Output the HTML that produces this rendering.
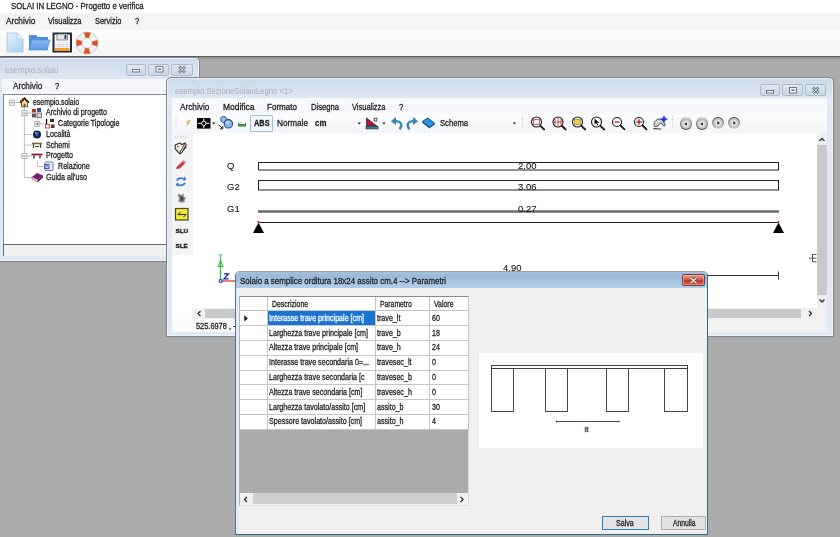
<!DOCTYPE html>
<html><head><meta charset="utf-8"><title>SOLAI IN LEGNO</title>
<style>
*{box-sizing:border-box;margin:0;padding:0}
html,body{width:840px;height:537px;overflow:hidden;background:#ababab;font-family:"Liberation Sans",sans-serif;color:#111}
.a{position:absolute}
.t{position:absolute;white-space:nowrap;line-height:1;color:#1c1c1c;font-size:9px;-webkit-text-stroke:.28px currentColor;transform:scaleX(.87);transform-origin:0 50%}
.ar{transform:scaleX(.999);font-size:9.5px;color:#111;-webkit-text-stroke:.08px #111}
svg{position:absolute;overflow:visible}
#main-top{left:0;top:0;width:840px;height:56px;background:#fff}
#main-menu{left:0;top:13px;width:840px;height:17px;background:linear-gradient(#f3f3f3,#f6f6f6)}
#main-tb{left:0;top:30px;width:840px;height:26px;background:linear-gradient(#fdfdfd,#f5f5f5)}
#mdi{left:0;top:55.800px;width:840px;height:482px;background:linear-gradient(#8f8f8f,#a6a6a6 2.500px,#ababab 5px);border-top:1.200px solid #606060}
.win{position:absolute;background:linear-gradient(#ccd9e8,#dfe8f3 21px,#e0e9f4);border:1px solid #7d8590;border-radius:5px 5px 0 0;box-shadow:inset 0 0 0 1px #eef3f9}
.cap{filter:blur(.55px);color:#a6afb9;-webkit-text-stroke:0}
.wb{position:absolute;height:12px;border:1px solid #adbaca;border-radius:2px;background:linear-gradient(#dfe7f1,#cbd7e6)}
.tr{font-size:8.700px;transform:scaleX(.82)}
.g{font-size:8.800px;color:#1c1c1c;transform:scaleX(.81)}
.gl{position:absolute;background:#c6c6c6}
</style></head><body>

<div class="a" id="main-top"></div>
<div class="t " style="left:11px;top:2px;">SOLAI IN LEGNO - Progetto e verifica</div>
<div class="a" id="main-menu"></div>
<div class="t " style="left:6px;top:17px;transform:scaleX(0.915)">Archivio</div>
<div class="t " style="left:48px;top:17px;transform:scaleX(0.83)">Visualizza</div>
<div class="t " style="left:95px;top:17px;transform:scaleX(0.825)">Servizio</div>
<div class="t " style="left:135px;top:17px;">?</div>
<div class="a" id="main-tb"></div>
<svg style="left:6px;top:32px" width="94" height="22" viewBox="0 0 94 22">
  <defs><linearGradient id="fg" x1="0" y1="0" x2=".6" y2="1"><stop offset="0" stop-color="#e6f0fa"/><stop offset=".5" stop-color="#cfe2f5"/><stop offset="1" stop-color="#b4d2ef"/></linearGradient><linearGradient id="fo" x1="0" y1="0" x2="0" y2="1"><stop offset="0" stop-color="#8dbaf2"/><stop offset="1" stop-color="#5f98e4"/></linearGradient></defs><path d="M1 1h10l6 6v13H1z" fill="url(#fg)" stroke="#a9cbea" stroke-width="1"/>
  <path d="M11 1v6h6z" fill="#eef6fd" stroke="#a9cbea" stroke-width=".8"/>
  <path d="M23 3h7l2 2h10v13H23z" fill="#4f8fda"/>
  <path d="M23 18l3-10h18l-3 10z" fill="url(#fo)" stroke="#4a86d0" stroke-width=".6"/>
  <rect x="47.500" y="1.500" width="17.500" height="18" fill="#f4f4f4" stroke="#1d2a3a" stroke-width="2"/>
  <rect x="51" y="2" width="10.500" height="6" fill="#dfe6ea" stroke="#555" stroke-width=".6"/>
  <rect x="49" y="10" width="14.500" height="7" fill="#f4f4f4"/><path d="M49 12.500h14.500M49 14.500h14.500M53 10v6M57 10v6M61 10v6" stroke="#c9c9c9" stroke-width=".5"/><rect x="58.500" y="3" width="1.800" height="4" fill="#333"/>
  <rect x="49" y="16" width="14.500" height="3" fill="#f39a2d"/>
  <circle cx="81" cy="11" r="8" fill="none" stroke="#f2f2f2" stroke-width="6"/>
  <circle cx="81" cy="11" r="8" fill="none" stroke="#dc5420" stroke-width="6" stroke-dasharray="5.200 7.366" stroke-dashoffset="2.600"/>
  <circle cx="81" cy="11" r="11" fill="none" stroke="#b9b9b9" stroke-width=".7"/>
  <circle cx="81" cy="11" r="5" fill="none" stroke="#c9c9c9" stroke-width=".7"/>
</svg>
<div class="a" id="mdi"></div>
<div class="win" style="left:-3px;top:57px;width:202.600px;height:204.500px"></div>
<div class="t cap" style="left:5px;top:66px;transform:scaleX(.89)">esempio.solaio</div>
<div class="wb" style="left:125.5px;top:63.700px;width:20.5px"></div>
<div class="wb" style="left:148.3px;top:63.700px;width:20.5px"></div>
<div class="wb" style="left:171.3px;top:63.700px;width:22px"></div>
<svg style="left:125px;top:63.200px" width="70" height="13" viewBox="0 0 70 13">
 <rect x="7.500" y="6.500" width="7" height="2.500" fill="#f4f7fb" stroke="#66717f" stroke-width=".9"/>
 <rect x="31" y="3.500" width="7" height="5.500" fill="#f4f7fb" stroke="#66717f" stroke-width=".9"/>
 <rect x="33" y="5.500" width="3" height="1.500" fill="#66717f"/>
 <path d="M54 3.500l6 6M60 3.500l-6 6" stroke="#66717f" stroke-width="2.600"/>
 <path d="M54 3.500l6 6M60 3.500l-6 6" stroke="#f4f7fb" stroke-width="1"/>
</svg>
<div class="a" style="left:2px;top:79px;width:193px;height:15px;background:#f5f7fa"></div>
<div class="t " style="left:13px;top:82px;transform:scaleX(0.915)">Archivio</div>
<div class="t " style="left:55px;top:82px;">?</div>
<div class="a" style="left:3px;top:94px;width:192px;height:150.600px;background:#fff;border:1px solid #868c94;border-bottom:1.600px solid #6c6c6c"></div>
<div class="a" style="left:3px;top:244.800px;width:192px;height:11.200px;background:#f0f0f0;border-left:1px solid #6c6c6c"></div>
<div class="t tr" style="left:33px;top:97.7px;transform:scaleX(0.795)">esempio.solaio</div>
<div class="t tr" style="left:46px;top:108.4px;">Archivio di progetto</div>
<div class="t tr" style="left:58px;top:119.1px;">Categorie Tipologie</div>
<div class="t tr" style="left:46px;top:129.8px;">Località</div>
<div class="t tr" style="left:46px;top:140.5px;">Schemi</div>
<div class="t tr" style="left:46px;top:151.3px;">Progetto</div>
<div class="t tr" style="left:58px;top:162.1px;">Relazione</div>
<div class="t tr" style="left:46px;top:172.8px;">Guida all'uso</div>
<svg style="left:0;top:94.500px" width="70" height="95" viewBox="0 94 70 95">
 <g stroke="#b4b4b4" stroke-width=".8" fill="none">
  <path d="M14.500 101.500h5.500M24.400 106v70.500M24.400 112h8M24.400 133.500h8M24.400 144h8M24.400 155h8M24.400 176.500h8M37.400 116.500v6.200h7M37.400 159v6.500h7"/>
 </g>
 <g fill="#fff" stroke="#9a9a9a" stroke-width=".8">
  <rect x="9.300" y="99.200" width="5" height="5"/><rect x="21.900" y="109.700" width="5" height="5"/><rect x="34.800" y="120.400" width="5" height="5"/><rect x="21.900" y="152.600" width="5" height="5"/>
 </g>
 <g stroke="#444" stroke-width=".7"><path d="M10.300 101.700h3M22.900 112.200h3M35.800 122.900h3M37.300 121.400v3M22.900 155.100h3"/></g>
 <!-- house -->
 <path d="M21.500 101.500v4.300h6v-4.300l-3-3z" fill="#f3e08a" stroke="#3a300e" stroke-width=".8"/>
 <path d="M20 101.700l4.500-4.600 4.500 4.600" fill="none" stroke="#1e1410" stroke-width="1.500"/>
 <path d="M20.200 100.800l2.800-3" fill="none" stroke="#d8201c" stroke-width="1.300"/>
 <rect x="23.600" y="102.800" width="1.800" height="3" fill="#5a4a1a"/>
 <!-- archivio -->
 <rect x="32" y="108" width="4" height="3.500" fill="#b5332c"/><rect x="37" y="107" width="4" height="4" fill="#3b4f9c"/>
 <rect x="32" y="112.500" width="4" height="4" fill="#5a5a5a"/><rect x="37" y="112" width="4.500" height="4.500" fill="#d9d9d9" stroke="#444" stroke-width=".7"/>
 <!-- categorie -->
 <path d="M46.500 118v5" stroke="#111" stroke-width="1.400"/><rect x="50" y="118" width="4" height="3" fill="#333"/>
 <rect x="45.500" y="123.500" width="4" height="3.500" fill="none" stroke="#d23a32" stroke-width=".9"/><rect x="51" y="123.500" width="3.500" height="3.500" fill="#7a2a2a"/>
 <!-- localita globe -->
 <circle cx="37" cy="133.400" r="4" fill="#13225c"/><path d="M35.500 131.500q2-1 3 .5t-1 3-2-1z" fill="#2f6a8a"/><circle cx="35.800" cy="131.800" r=".9" fill="#8fb4e8"/>
 <!-- schemi -->
 <path d="M32 142.500h10" stroke="#6b6a2a" stroke-width="1.600"/><path d="M33.500 143v4M40.500 143v4M35 145.500h4" stroke="#4e4d20" stroke-width="1.200"/>
 <!-- progetto -->
 <path d="M31.500 153.500h11" stroke="#8c1d2e" stroke-width="1.800"/><path d="M34 154.500v3M40 154.500v3" stroke="#222" stroke-width="1.300"/>
 <!-- relazione -->
 <rect x="45" y="161" width="8" height="8.500" rx="1" fill="#eef1fb" stroke="#4a58a8" stroke-width=".8"/><rect x="44" y="163" width="5.500" height="5" fill="#3f51b5"/><path d="M45 164l.8 3 1-2.500 1 2.500.8-3" stroke="#fff" stroke-width=".6" fill="none"/>
 <!-- guida book -->
 <path d="M32 176l5-4 6 2.500-5 4.500z" fill="#7c1f6e"/><path d="M32 176l6 3v2l-6-3z" fill="#f0e6ef" stroke="#5d1553" stroke-width=".5"/><path d="M38 179l5-4.500v2l-5 4.500z" fill="#5d1553"/>
</svg>
<div class="win" style="left:166px;top:77px;width:668px;height:260px"></div>
<div class="t cap" style="left:175px;top:86.5px;transform:scaleX(.86)">esempio.SezioneSolaioLegno &lt;1&gt;</div>
<div class="wb" style="left:759.5px;top:84.300px;width:20.8px"></div>
<div class="wb" style="left:782.2px;top:84.300px;width:20.8px"></div>
<div class="wb" style="left:805.2px;top:84.300px;width:21px"></div>
<svg style="left:759px;top:84px" width="72" height="13" viewBox="0 0 72 13">
 <rect x="7.500" y="6.500" width="7" height="2.500" fill="#f4f7fb" stroke="#5e6977" stroke-width=".9"/>
 <rect x="30.500" y="3.500" width="7" height="5.500" fill="#f4f7fb" stroke="#5e6977" stroke-width=".9"/>
 <rect x="32.500" y="5.500" width="3" height="1.500" fill="#5e6977"/>
 <path d="M54 3.500l5.500 5.500M59.500 3.500l-5.500 5.500" stroke="#5e6977" stroke-width="2.600"/>
 <path d="M54 3.500l5.500 5.500M59.500 3.500l-5.500 5.500" stroke="#f4f7fb" stroke-width="1"/>
</svg>
<div class="a" style="left:172px;top:98px;width:655px;height:233px;background:#fff"></div>
<div class="a" style="left:172px;top:98px;width:655px;height:16px;background:#f7f9fc"></div>
<div class="t " style="left:180px;top:102.5px;transform:scaleX(0.915)">Archivio</div>
<div class="t " style="left:223px;top:102.5px;transform:scaleX(0.94)">Modifica</div>
<div class="t " style="left:267px;top:102.5px;transform:scaleX(0.895)">Formato</div>
<div class="t " style="left:310.5px;top:102.5px;transform:scaleX(0.85)">Disegna</div>
<div class="t " style="left:351.5px;top:102.5px;transform:scaleX(0.83)">Visualizza</div>
<div class="t " style="left:398.5px;top:102.5px;">?</div>
<div class="a" style="left:172px;top:114px;width:655px;height:19px;background:linear-gradient(#fdfdfe,#f3f5f8)"></div>
<div class="a" style="left:172px;top:133px;width:20.800px;height:122px;background:#f4f4f6"></div>
<div class="a" style="left:250px;top:115px;width:23px;height:17px;background:#f2f7fc;border:1px solid #9ebfdd;border-radius:1px"></div>
<div class="t " style="left:253.6px;top:118.3px;font-weight:bold;font-size:9.600px;transform:scaleX(.77)">ABS</div>
<div class="t " style="left:276.5px;top:119px;transform:scaleX(0.91)">Normale</div>
<div class="t " style="left:315px;top:119px;font-weight:bold;font-size:9.300px;transform:scaleX(.85)">cm</div>
<div class="t " style="left:440px;top:119px;transform:scaleX(0.85)">Schema</div>
<svg style="left:172px;top:114px" width="655" height="19" viewBox="172 114 655 19">
 <g fill="#c9b98a"><rect x="175.500" y="117" width="1" height="1"/><rect x="175.500" y="119.500" width="1" height="1"/><rect x="175.500" y="122" width="1" height="1"/><rect x="175.500" y="124.500" width="1" height="1"/></g>
 <path d="M189 120l-3.500 3.200h2.500l-2.500 3.200 5-4h-2.500l3-2.400z" fill="#d9b43a"/>
 <rect x="197" y="118" width="13.500" height="10.600" fill="#05050a"/>
 <path d="M198 123.300h11.500M203.800 118.500v9.600" stroke="#fff" stroke-width="1"/><circle cx="203.800" cy="123.300" r="2.200" fill="#05050a" stroke="#fff" stroke-width=".9"/>
 <path d="M212 122.500h3.400l-1.700 2z" fill="#222"/>
 <circle cx="223.600" cy="119.500" r="3" fill="#9cc0ee" stroke="#274f8f" stroke-width="1"/>
 <circle cx="228.400" cy="123.800" r="4.200" fill="#86b2ea" stroke="#274f8f" stroke-width="1.100"/><circle cx="227.500" cy="122.600" r="1.600" fill="#c4dcf8"/>
 <path d="M219 125l3.500 3.500M222.800 126v2.800h-2.800" stroke="#222" stroke-width="1" fill="none"/>
 <rect x="238" y="124" width="8" height="2.500" fill="#3d8f3d"/><path d="M238.500 122.500v1.500M245.500 122.500v1.500" stroke="#333" stroke-width=".8"/><rect x="238" y="122" width="8" height="1" fill="#cfe6cf"/>
 <path d="M357.500 122.500h3.400l-1.700 2z" fill="#222"/>
 <path d="M366.500 118v8.200h10.500z" fill="#b0163c" stroke="#3a0d1c" stroke-width=".7"/><rect x="366" y="126.300" width="12" height="2.600" fill="#2b8a9b" stroke="#1c3a44" stroke-width=".7"/><rect x="374.200" y="118.200" width="2.600" height="2.800" fill="#fff" stroke="#333" stroke-width=".8"/>
 <path d="M382.300 122.500h3.400l-1.700 2z" fill="#222"/>
 <path d="M399.500 129.300C403.500 124.500 400.500 120.600 395 121.200" fill="none" stroke="#3a86b4" stroke-width="2.300"/><path d="M390.800 121.300l5.200-4.300v8z" fill="#3a86b4"/>
 <path d="M409.500 129.300C405.500 124.500 408.500 120.600 414 121.200" fill="none" stroke="#3a86b4" stroke-width="2.300"/><path d="M418.200 121.300l-5.200-4.300v8z" fill="#3a86b4"/>
 <path d="M422.300 121.500l5.500-3.500 7 5.500-5.500 3.800z" fill="#2596e0" stroke="#1a4f7a" stroke-width="1"/><path d="M422.300 122.300l7 5.500 5.500-3.800" fill="none" stroke="#15405f" stroke-width="1"/>
 <path d="M512.800 122.500h3.400l-1.700 2z" fill="#222"/>
 <g fill="#bdbdbd"><rect x="522" y="116.500" width="1" height="1"/><rect x="522" y="119" width="1" height="1"/><rect x="522" y="121.500" width="1" height="1"/><rect x="522" y="124" width="1" height="1"/><rect x="522" y="126.500" width="1" height="1"/><rect x="672" y="116.500" width="1" height="1"/><rect x="672" y="119" width="1" height="1"/><rect x="672" y="121.500" width="1" height="1"/><rect x="672" y="124" width="1" height="1"/><rect x="672" y="126.500" width="1" height="1"/></g>
 <g fill="none" stroke="#1a1a1a">
  <g stroke-width="1.100"><circle cx="536.500" cy="122" r="5"/><circle cx="558" cy="122" r="5"/><circle cx="577.500" cy="122" r="5"/><circle cx="596.500" cy="122" r="5"/><circle cx="617" cy="122" r="4.500"/><circle cx="639" cy="122" r="4.500"/></g>
  <g stroke-width="1.800" stroke-linecap="round"><path d="M540.500 126l3.700 3.500"/><path d="M562 126l3.700 3.500"/><path d="M581.500 126l3.700 3.500"/><path d="M600.500 126l3.700 3.500"/><path d="M620.500 125.500l4 3.800"/><path d="M642.500 125.500l4 3.800"/></g>
 </g>
 <rect x="533.500" y="119.700" width="6" height="4.600" fill="none" stroke="#b5475a" stroke-width=".9"/>
 <path d="M553.500 122h9M558 117.500v9M555 119v6M561 119v6" stroke="#c0283a" stroke-width=".8" fill="none"/>
 <rect x="574.700" y="119.300" width="5.600" height="5.400" fill="#f0cf4a" stroke="#8a7420" stroke-width=".6"/>
 <path d="M594.500 118.500v6l1.600-1.400 1.200 2.400 1-.5-1.200-2.300h2.100z" fill="#111"/>
 <path d="M614.500 122h5" stroke="#c0283a" stroke-width="1.300"/>
 <path d="M636.300 122h5.400M639 119.300v5.400" stroke="#c0283a" stroke-width="1.500"/>
 <path d="M654.500 126.500c-1.200-3 .5-6 3.500-7.300 2-.8 4 .2 5 2l2.500 4-1.500 1-2.500-3c-1.500 0-3 1-3.500 3z" fill="#d4d4d4" stroke="#3c3c3c" stroke-width=".9"/><path d="M653.300 128.800c3-.8 5 .8 8 0" stroke="#3c3c3c" stroke-width="1.100" fill="none"/>
 <path d="M664 115.800l1.100 2.300 2.400 1.100-2.400 1.100-1.100 2.300-1.100-2.300-2.400-1.100 2.400-1.100z" fill="#2a35e8" stroke="#2a35e8" stroke-width=".6"/>
</svg>
<div class="a" style="left:679.5px;top:117.3px;width:12.600px;height:12.600px;border-radius:50%;background:linear-gradient(#d8d8d8,#4a4a4a)"></div>
<div class="a" style="left:680.8px;top:118.6px;width:10px;height:10px;border-radius:50%;background:radial-gradient(circle at 50% 50%,#fff 0,#ececec 25%,#b4b4b4 70%,#909090 100%)"></div>
<svg style="left:684.0px;top:121.6px" width="4" height="4"><path d="M2.800 .2v3.600L.3 2z" fill="#111"/></svg>
<div class="a" style="left:695.7px;top:117.3px;width:12.600px;height:12.600px;border-radius:50%;background:linear-gradient(#d8d8d8,#4a4a4a)"></div>
<div class="a" style="left:697.0px;top:118.6px;width:10px;height:10px;border-radius:50%;background:radial-gradient(circle at 50% 50%,#fff 0,#ececec 25%,#b4b4b4 70%,#909090 100%)"></div>
<svg style="left:700.2px;top:121.6px" width="4" height="4"><path d="M2.800 .2v3.600L.3 2z" fill="#111"/></svg>
<div class="a" style="left:711.7px;top:116.8px;width:12.600px;height:12.600px;border-radius:50%;background:linear-gradient(#4a4a4a,#d8d8d8)"></div>
<div class="a" style="left:713.0px;top:118.1px;width:10px;height:10px;border-radius:50%;background:radial-gradient(circle at 50% 50%,#fff 0,#ececec 25%,#b4b4b4 70%,#909090 100%)"></div>
<svg style="left:716.8px;top:121.1px" width="4" height="4"><path d="M.4 .2v3.600L2.900 2z" fill="#111"/></svg>
<div class="a" style="left:727.7px;top:116.8px;width:12.600px;height:12.600px;border-radius:50%;background:linear-gradient(#4a4a4a,#d8d8d8)"></div>
<div class="a" style="left:729.0px;top:118.1px;width:10px;height:10px;border-radius:50%;background:radial-gradient(circle at 50% 50%,#fff 0,#ececec 25%,#b4b4b4 70%,#909090 100%)"></div>
<svg style="left:732.8px;top:121.1px" width="4" height="4"><path d="M.4 .2v3.600L2.900 2z" fill="#111"/></svg>
<svg style="left:172px;top:133px" width="19" height="122" viewBox="172 133 19 122">
 <g fill="#b5b5b5"><rect x="175" y="136.500" width="1" height="1"/><rect x="177.500" y="136.500" width="1" height="1"/><rect x="180" y="136.500" width="1" height="1"/><rect x="182.500" y="136.500" width="1" height="1"/><rect x="185" y="136.500" width="1" height="1"/></g>
 <path d="M175.200 145l4.300-2 2.500 1.500 3-1.500 1 4-6 7-4.800-5z" fill="#f4f4ee" stroke="#2a2a2a" stroke-width="1.100"/>
 <path d="M180 152l4.800-8.500 1.600 1-4.800 8.500z" fill="#d8d2a0" stroke="#2a2a2a" stroke-width=".8"/><circle cx="177.800" cy="146.500" r=".9" fill="#c03030"/>
 <path d="M176.300 168.800l1-2.600 5.200-5 2.600 2.400-5.300 5z" fill="#c8404a"/><path d="M176.300 168.800l.8-2.200 1.400 1.400z" fill="#5a2a20"/><path d="M182.500 161.200l2.600 2.400 1-1.200-2.400-2.400z" fill="#e07880"/>
 <path d="M176 180.500c1-3 5-4 8-2.500v-1.800l2.500 3-3 2v-1.600c-2-1-4.500-.5-5.500 1.200z" fill="#2f7fd8"/>
 <path d="M186 183c-1 3-5 4-8 2.500v1.800l-2.500-3 3-2v1.600c2 1 4.500.5 5.500-1.200z" fill="#2f7fd8"/>
 <path d="M178.500 193.500l3 1.500 2-1.500.5 3 2 1.500-1.500 2 .5 2.500h-5l-2-2 1.500-2.500-2-2z" fill="#8d8d8d"/><path d="M180 196l3 1 .5 3-2.500 1.500z" fill="#3c3c3c"/>
 <rect x="175.500" y="208.500" width="12.500" height="11.500" fill="#f2ea3a" stroke="#4c4a12" stroke-width="1.200"/>
 <path d="M178 214.500h8M180.500 212l-2.500 2.500M186 214.500l-2.500 2.500" stroke="#222" stroke-width="1" fill="none"/>
</svg>
<div class="t " style="left:175.5px;top:227.5px;font-weight:bold;font-size:6.200px;transform:scaleX(1);color:#111">SLU</div>
<div class="t " style="left:175.5px;top:242.5px;font-weight:bold;font-size:6.200px;transform:scaleX(1);color:#111">SLE</div>
<svg style="left:192px;top:133px" width="625" height="175" viewBox="192 133 625 175">
 <rect x="258.500" y="162.500" width="520" height="7.500" fill="#fff" stroke="#222" stroke-width="1"/>
 <rect x="258.500" y="180.500" width="520" height="9.500" fill="#fff" stroke="#222" stroke-width="1"/>
 <path d="M258 211.500h521" stroke="#6a6a6a" stroke-width="2.400"/>
 <path d="M258 222.500h521" stroke="#222" stroke-width="1"/>
 <path d="M258.500 222.500l-5.500 10.500h11z" fill="#000"/><path d="M778.500 222.500l-5.500 10.500h11z" fill="#000"/>
 <circle cx="258.500" cy="222" r="1.200" fill="#e05050"/><circle cx="778.500" cy="222" r="1.200" fill="#e05050"/>
 <path d="M258 275.500h520.500M778.500 271.500v8" stroke="#333" stroke-width="1" fill="none"/>
 <path d="M220.500 281v-22" stroke="#22c03a" stroke-width="1.200"/><path d="M220.500 260.500l-2.600 6h5.200z" fill="none" stroke="#22c03a" stroke-width="1"/>
 <path d="M218.800 254l1.700 2.500 1.700-2.500M220.500 256.500v2.500" stroke="#22c03a" stroke-width=".9" fill="none"/>
 <path d="M222 281h14" stroke="#e02a20" stroke-width="1.200"/>
 <circle cx="220.700" cy="281" r="1.500" fill="#fff" stroke="#1a22b8" stroke-width="1.100"/>
 <path d="M224 273.800h4.500l-4.500 5h4.800" stroke="#1a22b8" stroke-width="1.300" fill="none"/>
 <path d="M816.500 254.500h-4v7.300h4M809 258.200h7.500" stroke="#444" stroke-width=".9" fill="none"/>
</svg>
<div class="t ar" style="left:226.5px;top:160.5px;">Q</div>
<div class="t ar" style="left:226.5px;top:182px;">G2</div>
<div class="t ar" style="left:226.5px;top:204px;">G1</div>
<div class="t ar" style="left:518px;top:160.8px;">2.00</div>
<div class="t ar" style="left:518px;top:181.8px;">3.06</div>
<div class="t ar" style="left:518px;top:203.8px;">0.27</div>
<div class="t ar" style="left:503px;top:263.4px;">4.90</div>
<div class="a" style="left:817px;top:133px;width:10px;height:175px;background:#f0f0f0"></div>
<div class="a" style="left:817px;top:145px;width:10px;height:150px;background:#c9c9c9"></div>
<div class="a" style="left:192px;top:308px;width:625px;height:10.500px;background:#f0f0f0"></div>
<div class="a" style="left:205px;top:308.500px;width:596px;height:9.500px;background:#c9c9c9"></div>
<svg style="left:192px;top:133px" width="640" height="190" viewBox="192 133 640 190">
 <g fill="none" stroke="#333" stroke-width="1.300"><path d="M819.500 141l2.500-2.500 2.500 2.500"/><path d="M819.500 299.500l2.500 2.500 2.500-2.500"/><path d="M200.500 311l-2.500 2.500 2.500 2.500"/><path d="M809 311l2.500 2.500-2.500 2.500"/></g>
</svg>
<div class="a" style="left:172px;top:318.500px;width:655px;height:13px;background:linear-gradient(90deg,#fbfbfb 10%,#f2f2f2 30%)"></div>
<div class="a" style="left:817px;top:308px;width:10px;height:11px;background:#f2f2f2"></div>
<div class="t " style="left:195.5px;top:321.5px;font-size:8.500px">525.6978 , -</div>
<div class="a" style="left:235px;top:270.600px;width:473px;height:264.200px;background:#f0f0f0;border:1px solid #2b6b86;border-top-color:#9a9da2;border-left-color:#5d6f88;border-radius:5px 5px 0 0;overflow:hidden"><div class="a" style="left:0;top:0;width:473px;height:16px;background:linear-gradient(#a3bfde,#9bb8da 30%,#a9c6e5 65%,#b2ceeb)"></div><div class="a" style="left:0;top:16px;width:3.300px;height:248px;background:#e4ecf5"></div></div>
<div class="t " style="left:239.8px;top:275.9px;font-size:9.500px;transform:scaleX(.835)">Solaio a semplice orditura 18x24 assito cm.4 --&gt; Parametri</div>
<div class="a" style="left:682px;top:274px;width:22.500px;height:12px;border:1px solid #7d3a30;border-radius:2px;background:linear-gradient(#e8a596,#d2584a 45%,#bf3a2c 50%,#d4604c);box-shadow:inset 0 0 0 .6px #f2c4b8"></div>
<svg style="left:689px;top:276.500px" width="9" height="7" viewBox="0 0 9 7"><path d="M1.500 .8l6 5.400M7.500 .8l-6 5.400" stroke="#6a2a22" stroke-width="2.600"/><path d="M1.500 .8l6 5.400M7.500 .8l-6 5.400" stroke="#fff" stroke-width="1.300"/></svg>
<div class="a" style="left:239px;top:296px;width:230px;height:210px;background:#ababab;border:1px solid #8c8c8c;border-left-color:#b0b4b8;border-right-color:#d8d8d8;border-bottom-color:#e0e0e0"></div>
<div class="a" style="left:240px;top:297px;width:228px;height:132px;background:#fff"></div>
<div class="a" style="left:267px;top:311px;width:108px;height:14.500px;background:#1874d0"></div>
<div class="gl" style="left:240px;top:310.2px;width:228px;height:.8px"></div>
<div class="gl" style="left:240px;top:325.0px;width:228px;height:.8px"></div>
<div class="gl" style="left:240px;top:339.8px;width:228px;height:.8px"></div>
<div class="gl" style="left:240px;top:354.7px;width:228px;height:.8px"></div>
<div class="gl" style="left:240px;top:369.5px;width:228px;height:.8px"></div>
<div class="gl" style="left:240px;top:384.3px;width:228px;height:.8px"></div>
<div class="gl" style="left:240px;top:399.1px;width:228px;height:.8px"></div>
<div class="gl" style="left:240px;top:413.9px;width:228px;height:.8px"></div>
<div class="gl" style="left:240px;top:428.8px;width:228px;height:.8px"></div>
<div class="gl" style="left:266.5px;top:297px;width:.8px;height:132px"></div>
<div class="gl" style="left:375px;top:297px;width:.8px;height:132px"></div>
<div class="gl" style="left:428.5px;top:297px;width:.8px;height:132px"></div>
<div class="gl" style="left:468px;top:297px;width:.8px;height:132px"></div>
<div class="t g" style="left:272.2px;top:300px;transform:scaleX(0.787)">Descrizione</div>
<div class="t g" style="left:380px;top:300px;transform:scaleX(0.775)">Parametro</div>
<div class="t g" style="left:434px;top:300px;transform:scaleX(0.786)">Valore</div>
<div class="t g" style="left:269.1px;top:313.7px;color:#fff">Interasse trave principale [cm]</div>
<div class="t g" style="left:377px;top:313.7px;">trave_lt</div>
<div class="t g" style="left:431.5px;top:313.7px;">60</div>
<div class="t g" style="left:269.1px;top:328.5px;">Larghezza trave principale [cm]</div>
<div class="t g" style="left:377px;top:328.5px;">trave_b</div>
<div class="t g" style="left:431.5px;top:328.5px;">18</div>
<div class="t g" style="left:269.1px;top:343.3px;">Altezza trave principale [cm]</div>
<div class="t g" style="left:377px;top:343.3px;">trave_h</div>
<div class="t g" style="left:431.5px;top:343.3px;">24</div>
<div class="t g" style="left:269.1px;top:358.2px;">Interasse trave secondaria 0=...</div>
<div class="t g" style="left:377px;top:358.2px;">travesec_lt</div>
<div class="t g" style="left:431.5px;top:358.2px;">0</div>
<div class="t g" style="left:269.1px;top:373.0px;">Larghezza trave secondaria [c</div>
<div class="t g" style="left:377px;top:373.0px;">travesec_b</div>
<div class="t g" style="left:431.5px;top:373.0px;">0</div>
<div class="t g" style="left:269.1px;top:387.8px;">Altezza trave secondaria [cm]</div>
<div class="t g" style="left:377px;top:387.8px;">travesec_h</div>
<div class="t g" style="left:431.5px;top:387.8px;">0</div>
<div class="t g" style="left:269.1px;top:402.6px;">Larghezza tavolato/assito [cm]</div>
<div class="t g" style="left:377px;top:402.6px;">assito_b</div>
<div class="t g" style="left:431.5px;top:402.6px;">30</div>
<div class="t g" style="left:269.1px;top:417.4px;">Spessore tavolato/assito [cm]</div>
<div class="t g" style="left:377px;top:417.4px;">assito_h</div>
<div class="t g" style="left:431.5px;top:417.4px;">4</div>
<svg style="left:244px;top:315.200px" width="4" height="7"><path d="M.3 .2v6.400l3.500-3.200z" fill="#111"/></svg>
<div class="a" style="left:240px;top:492.500px;width:228px;height:12.500px;background:#f0f0f0"></div>
<div class="a" style="left:253px;top:493px;width:204px;height:11px;background:#cdcdcd"></div>
<svg style="left:240px;top:492.500px" width="227" height="13" viewBox="0 0 227 13"><g fill="none" stroke="#333" stroke-width="1.300"><path d="M7 4l-2.500 2.500 2.500 2.500"/><path d="M220.500 4l2.500 2.500-2.500 2.500"/></g></svg>
<div class="a" style="left:478.500px;top:353px;width:224.500px;height:95px;background:#fff"></div>
<svg style="left:478px;top:353px" width="225" height="95" viewBox="478 353 225 95">
 <g fill="#fff" stroke="#333" stroke-width=".9">
  <rect x="491.500" y="368.500" width="22" height="43"/><rect x="545.500" y="368.500" width="22" height="43"/><rect x="606.500" y="368.500" width="22" height="43"/><rect x="664.500" y="368.500" width="23" height="43"/>
  <rect x="491.500" y="365.500" width="196" height="3"/>
 </g>
 <path d="M556.500 421.500h62.500M556.500 420.500v2M619 420.500v2" stroke="#333" stroke-width=".9" fill="none"/>
</svg>
<div class="t " style="left:584.5px;top:425.5px;font-size:8px;transform:none;color:#333">lt</div>
<div class="a" style="left:602px;top:516.200px;width:46.800px;height:14px;background:#e3e3e3;border:1.500px solid #2f7fc4"></div>
<div class="t g" style="left:615.8px;top:519.2px;">Salva</div>
<div class="a" style="left:661px;top:516.200px;width:45px;height:14px;background:#e2e2e2;border:1px solid #adadad"></div>
<div class="t g" style="left:672.5px;top:519.2px;transform:scaleX(0.77)">Annulla</div>
</body></html>
